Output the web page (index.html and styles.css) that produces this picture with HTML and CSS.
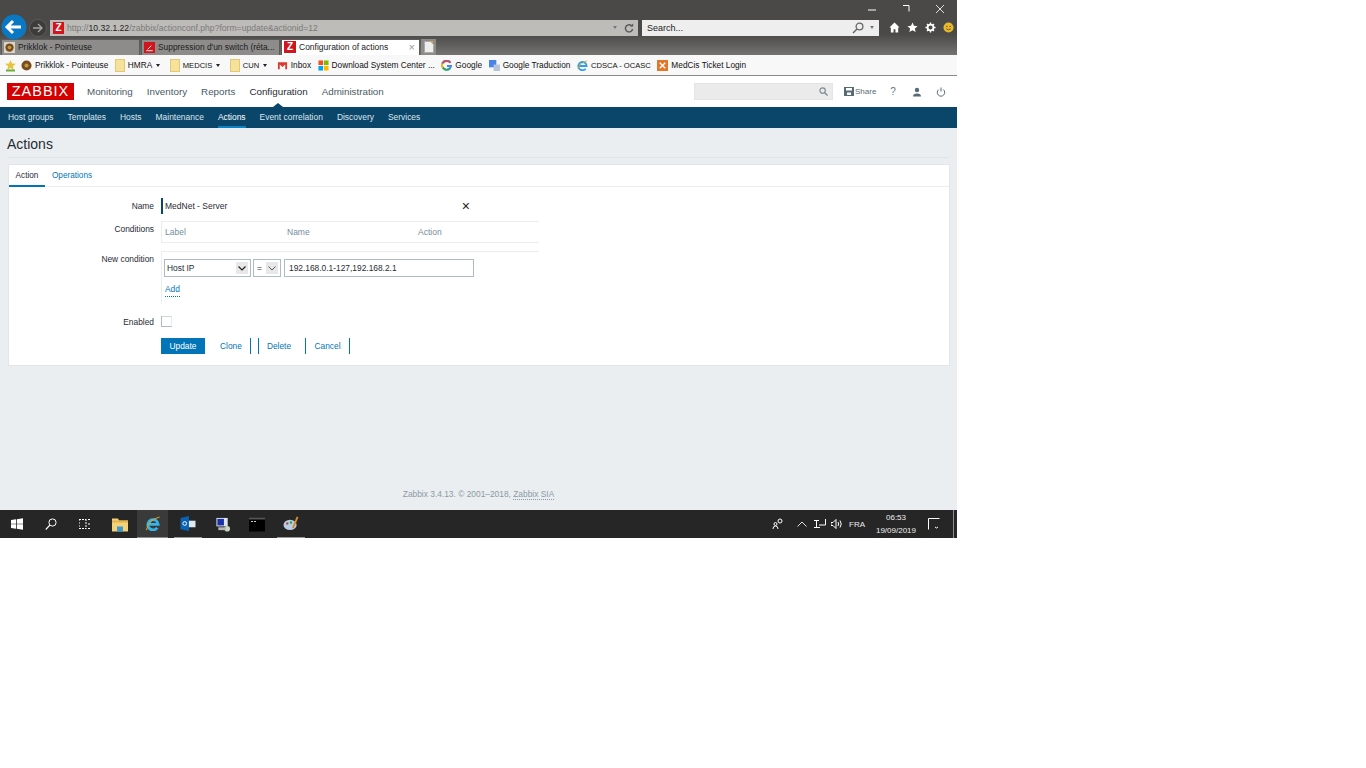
FILE: index.html
```html
<!DOCTYPE html>
<html lang="en">
<head>
<meta charset="utf-8">
<title>Configuration of actions</title>
<link rel="stylesheet" href="styles.css">
</head>
<body>
<div class="screen">
  <div class="chrome">
    <div class="winbar">
      <svg class="win-ic" viewBox="0 0 10 10"><path d="M1 6h8" stroke="#fff" fill="none"/></svg>
      <svg class="win-ic" viewBox="0 0 10 10"><path d="M2 1.500h6v6" stroke="#fff" fill="none"/></svg>
      <svg class="win-ic" viewBox="0 0 10 10"><path d="M1 1l8 8M9 1l-8 8" stroke="#ddd" fill="none"/></svg>
    </div>
    <div class="addr-row">
      <svg class="back" viewBox="0 0 26 26"><circle cx="13" cy="13" r="12.500" fill="#0a78c2"/><path d="M6 13h14M12 7l-6 6 6 6" stroke="#fff" stroke-width="3" fill="none"/></svg>
      <svg class="fwd" viewBox="0 0 18 18"><circle cx="9" cy="9" r="8.500" fill="#3d3c3a" stroke="#5d5c5a"/><path d="M4 9h9M9 5l4 4-4 4" stroke="#a5a5a3" stroke-width="1.400" fill="none"/></svg>
      <div class="addr">
        <span class="zfav">Z</span>
        <span class="url"><span class="url-dim">http://</span><b>10.32.1.22</b><span class="url-dim">/zabbix/actionconf.php?form=update&amp;actionid=12</span></span>
        <span class="addr-tools"><span class="mini-caret"></span>
          <svg class="refresh" viewBox="0 0 10 10"><path d="M8 3.200A3.600 3.600 0 1 0 8.600 6" stroke="#555" stroke-width="1.400" fill="none"/><path d="M6 3.500h3.200V.5z" fill="#555"/></svg>
        </span>
      </div>
      <div class="search">
        <span class="search-text">Search...</span>
        <svg class="search-ic" viewBox="0 0 12 12"><circle cx="7.500" cy="4.500" r="3.400" stroke="#666" stroke-width="1.300" fill="none"/><path d="M5 7l-4 4" stroke="#666" stroke-width="1.500"/></svg>
        <span class="mini-caret"></span>
      </div>
      <div class="tools">
        <svg class="tool" viewBox="0 0 12 12"><path d="M6 .5L.5 6H2v5.500h3V8h2v3.500h3V6h1.500z" fill="#fff"/></svg>
        <svg class="tool" viewBox="0 0 12 12"><path d="M6 .5l1.600 3.600 3.900.4-2.900 2.600.8 3.900L6 9l-3.400 2 .8-3.900L.5 4.500l3.900-.4z" fill="#fff"/></svg>
        <svg class="tool" viewBox="0 0 12 12"><circle cx="6" cy="6" r="3.200" stroke="#fff" stroke-width="2" fill="none"/><path d="M6 .5v2M6 9.500v2M.5 6h2M9.500 6h2M2.200 2.200l1.400 1.400M8.400 8.400l1.400 1.400M2.200 9.800l1.400-1.400M8.400 3.600l1.400-1.400" stroke="#fff" stroke-width="1.600"/></svg>
        <svg class="tool" viewBox="0 0 12 12"><circle cx="6" cy="6" r="5.500" fill="#e9b92e"/><circle cx="4.200" cy="4.800" r=".8" fill="#6b5510"/><circle cx="7.800" cy="4.800" r=".8" fill="#6b5510"/><path d="M3.500 7.500q2.500 2 5 0" stroke="#6b5510" fill="none"/></svg>
      </div>
    </div>
    <div class="tab-row">
      <div class="tab">
        <svg class="fav" viewBox="0 0 12 12"><rect width="12" height="12" fill="#d9d4c4"/><circle cx="6" cy="6" r="4.500" fill="#7a4a20"/><circle cx="6" cy="6" r="2" fill="#b9a13a"/></svg>
        <span class="tab-text">Prikklok - Pointeuse</span>
      </div>
      <div class="tab">
        <svg class="fav" viewBox="0 0 12 12"><rect width="12" height="12" fill="#d2141c"/><path d="M2.500 9.500h7M4 8l4-4" stroke="#fff"/></svg>
        <span class="tab-text">Suppression d'un switch (réta...</span>
      </div>
      <div class="tab tab-active">
        <span class="zfav">Z</span>
        <span class="tab-text">Configuration of actions</span>
        <span class="tab-x">×</span>
      </div>
      <div class="tab-new"><svg viewBox="0 0 10 12" class="new-ic"><path d="M.5.500h6l3 3v8h-9z" fill="#eee" stroke="#aaa"/><path d="M7 0h2v2H7z" fill="#e8a33a"/></svg></div>
    </div>
  </div>

  <div class="bookmarks">
    <svg class="bm-star" viewBox="0 0 13 13"><path d="M6.500 1l1.500 3.500 3.800.3-2.900 2.500.9 3.700-3.300-2-3.300 2 .9-3.700L1.200 4.800 5 4.500z" fill="#e9c33b"/><path d="M2 11.500h9" stroke="#6aae3c" stroke-width="2"/></svg>
    <span class="bm"><svg class="fav" viewBox="0 0 12 12"><circle cx="6" cy="6" r="5.500" fill="#7a4a20"/><circle cx="6" cy="6" r="2.200" fill="#b9a13a"/></svg>Prikklok - Pointeuse</span>
    <span class="bm"><span class="folder"></span>HMRA<span class="caret"></span></span>
    <span class="bm bm-caps"><span class="folder"></span>MEDCIS<span class="caret"></span></span>
    <span class="bm bm-caps"><span class="folder"></span>CUN<span class="caret"></span></span>
    <span class="bm"><svg class="fav" viewBox="0 0 12 12"><path d="M1 2.500h10v7.500h-2V5L6 7.500 3 5v5H1z" fill="#d93a2f"/></svg>Inbox</span>
    <span class="bm"><svg class="fav" viewBox="0 0 12 12"><path d="M.5.500h5v5h-5z" fill="#f25022"/><path d="M6.500.500h5v5h-5z" fill="#7fba00"/><path d="M.5 6.500h5v5h-5z" fill="#00a4ef"/><path d="M6.500 6.500h5v5h-5z" fill="#ffb900"/></svg>Download System Center ...</span>
    <span class="bm"><svg class="fav" viewBox="0 0 12 12"><path d="M10.500 3A5 5 0 1 0 11 6.500H6.500" stroke="#4285f4" stroke-width="2" fill="none"/><path d="M2 3.500A5 5 0 0 1 10 3" stroke="#ea4335" stroke-width="2" fill="none"/><path d="M1.500 4A5 5 0 0 0 2 8.500" stroke="#fbbc05" stroke-width="2" fill="none"/><path d="M2 8.500A5 5 0 0 0 9.500 9.500" stroke="#34a853" stroke-width="2" fill="none"/></svg>Google</span>
    <span class="bm"><svg class="fav" viewBox="0 0 12 12"><rect width="8" height="8" fill="#4a84e8"/><rect x="5" y="5" width="7" height="7" fill="#b8c4d6"/></svg>Google Traduction</span>
    <span class="bm bm-caps"><svg class="fav" viewBox="0 0 12 12"><path d="M2 6.500h8.500A4.500 4.500 0 1 0 9.500 9.500" stroke="#2f9fe0" stroke-width="2" fill="none"/><path d="M1 10Q3 3 11 1" stroke="#e0a92a" fill="none"/></svg>CDSCA - OCASC</span>
    <span class="bm"><svg class="fav" viewBox="0 0 12 12"><rect width="12" height="12" fill="#e2762a"/><path d="M3 3l6 6M9 3l-6 6" stroke="#fff" stroke-width="1.500"/></svg>MedCis Ticket Login</span>
  </div>

  <header class="zhead">
    <span class="logo">ZABBIX</span>
    <nav class="topnav">
      <a>Monitoring</a><a>Inventory</a><a>Reports</a><a class="cur">Configuration</a><a>Administration</a>
    </nav>
    <div class="zsearch">
      <svg class="zs-ic" viewBox="0 0 10 10"><circle cx="4" cy="4" r="3" stroke="#7c8a94" stroke-width="1.300" fill="none"/><path d="M6.300 6.300L9.500 9.500" stroke="#7c8a94" stroke-width="1.500"/></svg>
    </div>
    <span class="share"><svg class="share-ic" viewBox="0 0 10 9"><path d="M0 0h10v9H0z" fill="#566b78"/><path d="M2 1h6v2.500H2zM3 5.500h4V8H3z" fill="#fff"/></svg>Share</span>
    <span class="hicon help">?</span>
    <svg class="hicon" viewBox="0 0 10 10"><circle cx="5" cy="3" r="2.200" fill="#566b78"/><path d="M1 9.500q0-3 4-3t4 3z" fill="#566b78"/></svg>
    <svg class="hicon" viewBox="0 0 10 10"><path d="M2.800 2.500a3.700 3.700 0 1 0 4.400 0" stroke="#566b78" fill="none"/><path d="M5 .5v4" stroke="#566b78"/></svg>
  </header>

  <nav class="subnav">
    <a>Host groups</a><a>Templates</a><a>Hosts</a><a>Maintenance</a><a class="sub-cur">Actions</a><a>Event correlation</a><a>Discovery</a><a>Services</a>
  </nav>

  <main class="main">
    <h1 class="title">Actions</h1>
    <section class="card">
      <div class="tabs"><a class="t-on">Action</a><a class="t-off">Operations</a></div>
      <form class="form">
        <div class="row row-name">
          <label class="lbl">Name</label>
          <div class="name-field"><span>MedNet - Server</span><span class="clear">×</span></div>
        </div>
        <div class="row row-cond">
          <label class="lbl lbl-top">Conditions</label>
          <div class="cond-table"><span class="c1">Label</span><span class="c2">Name</span><span class="c3">Action</span></div>
        </div>
        <div class="row row-new">
          <label class="lbl lbl-top2">New condition</label>
          <div class="new-box">
            <div class="new-line">
              <div class="sel sel-a"><span>Host IP</span><span class="sel-btn"><svg viewBox="0 0 8 5"><path d="M.5.500L4 4 7.500.500" stroke="#222" stroke-width="1.200" fill="none"/></svg></span></div>
              <div class="sel sel-b"><span>=</span><span class="sel-btn"><svg viewBox="0 0 8 5"><path d="M.5.500L4 4 7.500.500" stroke="#555" fill="none"/></svg></span></div>
              <div class="ipt">192.168.0.1-127,192.168.2.1</div>
            </div>
            <a class="add">Add</a>
          </div>
        </div>
        <div class="row row-en">
          <label class="lbl">Enabled</label>
          <span class="check"></span>
        </div>
        <div class="row-btn">
          <span class="btn-main">Update</span>
          <span class="btn btn-clone">Clone</span>
          <span class="btn btn-del">Delete</span>
          <span class="btn btn-can">Cancel</span>
        </div>
      </form>
    </section>
    <footer class="foot">Zabbix 3.4.13. © 2001–2018, <span class="foot-link">Zabbix SIA</span></footer>
  </main>

  <div class="taskbar">
    <span class="slot"><svg class="tb" viewBox="0 0 12 12"><path d="M0 2l5-.7V5.700H0zM5.800 1.200L12 .3v5.400H5.800zM0 6.300h5v4.500L0 10zM5.800 6.300H12v5.400l-6.200-.9z" fill="#fff"/></svg></span>
    <span class="slot"><svg class="tb" viewBox="0 0 12 12"><circle cx="7.500" cy="4.500" r="3.600" stroke="#fff" fill="none"/><path d="M4.800 7.200L.8 11.500" stroke="#fff" stroke-width="1.200"/></svg></span>
    <span class="slot"><svg class="tb" viewBox="0 0 12 12"><path d="M0 1.500h7M0 10.500h7M0 1v10M7 1v10M9 1.500h3M9 6h3M9 10.500h3" stroke="#fff" stroke-dasharray="2 1" fill="none"/></svg></span>
    <span class="slot slot-folder"><svg class="tb tb-l" viewBox="0 0 16 14"><path d="M0 1h6l1 2h9v11H0z" fill="#f3d27a"/><path d="M0 3h16v2H0z" fill="#e2b34b"/><path d="M5 9h6v5H5z" fill="#3d9ad1"/></svg></span>
    <span class="slot slot-on"><svg class="tb tb-l" viewBox="0 0 16 16"><path d="M2.500 9h11A5.500 5.500 0 1 0 12.500 12.500" stroke="#35b3ea" stroke-width="3" fill="none"/><path d="M1 15Q3 4 15 1" stroke="#d9a522" stroke-width="1.200" fill="none"/></svg></span>
    <span class="slot slot-run slot-mail"><svg class="tb tb-l" viewBox="0 0 16 16"><path d="M8 5h8v7H8z" fill="#dce8f4"/><path d="M0 2l9-2v16l-9-2z" fill="#0a62b4"/><circle cx="4.500" cy="8" r="2" stroke="#fff" fill="none"/></svg></span>
    <span class="slot"><svg class="tb tb-l" viewBox="0 0 16 16"><path d="M1 1h12v9H1z" fill="#dfe6f2"/><path d="M2 2h7v7H2z" fill="#1a2fa8"/><circle cx="12.500" cy="12.500" r="3" fill="#c9d6c4"/><path d="M3 11h8v3H3z" fill="#b5b5b5"/></svg></span>
    <span class="slot"><svg class="tb tb-l" viewBox="0 0 16 14"><path d="M0 0h16v14H0z" fill="#000"/><path d="M0 0h16v2H0z" fill="#555"/><path d="M2 4h2M5 4h2" stroke="#ccc"/></svg></span>
    <span class="slot slot-run slot-paint"><svg class="tb tb-l" viewBox="0 0 16 16"><ellipse cx="7" cy="9.500" rx="7" ry="5.500" fill="#b4cfe6"/><circle cx="4" cy="8" r="1.300" fill="#c43"/><circle cx="8" cy="7" r="1.300" fill="#3a3"/><path d="M10 13L15 1" stroke="#d98a2a" stroke-width="2"/></svg></span>
    <div class="tray">
      <svg class="tr tr-p" viewBox="0 0 12 12"><circle cx="8" cy="3" r="2" stroke="#fff" fill="none"/><circle cx="3.500" cy="6" r="1.500" stroke="#fff" fill="none"/><path d="M1 11q0-3 2.500-3T6 11" stroke="#fff" fill="none"/></svg>
      <svg class="tr tr-c" viewBox="0 0 10 6"><path d="M.5 5.500L5 1l4.500 4.500" stroke="#ddd" fill="none"/></svg>
      <svg class="tr tr-n" viewBox="0 0 12 10"><path d="M0 1.500h5M2.500 1.500v7M0 8.500h6M5 6h6.500V0" stroke="#fff" fill="none"/></svg>
      <svg class="tr tr-s" viewBox="0 0 12 10"><path d="M0 3.500h2l3-3v9l-3-3H0z" stroke="#fff" fill="none"/><path d="M7 3q1.500 2 0 4M9 1.500q2.500 3.500 0 7" stroke="#fff" fill="none"/></svg>
      <span class="fra">FRA</span>
      <span class="clock"><span>06:53</span><span>19/09/2019</span></span>
      <svg class="tr tr-m" viewBox="0 0 12 12"><path d="M11.500 .5H.5v11M7 9l1.500 1L10 9" stroke="#fff" fill="none"/></svg>
      <span class="show-desk"></span>
    </div>
  </div>
</div>
</body>
</html>
```

FILE: styles.css
```css
* { box-sizing: border-box; }
html, body { margin: 0; padding: 0; background: #fff; }
body { font-family: "Liberation Sans", Arial, sans-serif; font-size: 9px; color: #1f2c33; }
svg { display: block; flex: none; }

.screen { width: 957px; height: 538px; display: flex; flex-direction: column; overflow: hidden; }

/* browser chrome */
.chrome { height: 55px; background: linear-gradient(#4a4947 0, #4a4947 34px, #6a6967 50px, #74736f 55px); display: flex; flex-direction: column; }
.winbar { height: 18px; display: flex; justify-content: flex-end; gap: 24px; padding: 4px 12px 0 0; }
.win-ic { width: 10px; height: 10px; }
.addr-row { height: 19px; display: flex; align-items: center; padding-left: 1px; }
.back { width: 26px; height: 26px; margin-bottom: 2px; position: relative; z-index: 1; }
.fwd { width: 18px; height: 18px; margin: 0 3px 0 2px; }
.addr { width: 588px; height: 16px; background: #bdbcb9; display: flex; align-items: center; font-size: 8.600px; }
.zfav { width: 12px; height: 12px; background: #d2141c; color: #fff; font-size: 10px; font-weight: 700; line-height: 12px; text-align: center; flex: none; display: block; }
.addr .zfav { margin: 0 3px 0 3px; width: 11px; }
.url { flex: 1; color: #2b2b2b; white-space: nowrap; }
.url b { font-weight: 400; color: #222; }
.url-dim { color: #7b7a77; }
.addr-tools { display: flex; align-items: center; gap: 7px; padding-right: 4px; }
.mini-caret { width: 0; height: 0; border: 2px solid transparent; border-top: 3px solid #777; border-bottom: 0; }
.refresh { width: 10px; height: 10px; }
.search { width: 237px; height: 16px; margin-left: 4px; background: #eeeeee; display: flex; align-items: center; padding: 0 5px; font-size: 9px; color: #222; }
.search-text { flex: 1; }
.search-ic { width: 12px; height: 12px; margin-right: 6px; }
.tools { display: flex; gap: 7px; margin-left: 10px; }
.tool { width: 11px; height: 11px; }

.tab-row { height: 16px; margin-top: 2px; display: flex; padding-left: 1px; gap: 1px; }
.tab { width: 139px; height: 16px; background: #8d8c8a; border: 1px solid #5c5b59; border-bottom: 0; display: flex; align-items: center; padding: 0 0 1px 2px; gap: 3px; font-size: 8.400px; color: #1c1c1c; white-space: nowrap; overflow: hidden; }
.tab-text { flex: 1; }
.tab-active { background: #fff; color: #222; font-size: 8.500px; }
.tab-x { color: #999; font-size: 11px; padding-right: 4px; line-height: 10px; }
.fav { width: 11px; height: 11px; flex: none; }
.tab-new { width: 15px; height: 16px; background: #8d8c8a; display: flex; align-items: center; justify-content: center; }
.new-ic { width: 10px; height: 12px; }

.bookmarks { height: 21px; background: #f8f8f8; border-bottom: 1px solid #8a8a8a; display: flex; align-items: center; padding-left: 4px; font-size: 8.300px; color: #111; white-space: nowrap; }
.bm-star { width: 13px; height: 13px; margin-right: 4px; }
.bm { display: flex; align-items: center; gap: 3px; margin-right: 6.500px; }
.bm-caps { font-size: 7.600px; }
.folder { width: 10px; height: 13px; background: #f7e29a; border: 1px solid #e0c877; display: block; }
.caret { width: 0; height: 0; border: 2px solid transparent; border-top: 3px solid #222; border-bottom: 0; margin-left: 1px; margin-right: 3px; }

/* zabbix header */
.zhead { height: 31px; background: #fff; display: flex; align-items: center; padding: 0 11px 0 7px; }
.logo { width: 67px; height: 17px; background: #d40000; color: #fff; font-size: 14.500px; line-height: 17px; text-align: center; letter-spacing: 1px; }
.topnav { display: flex; gap: 14px; margin-left: 13px; flex: 1; font-size: 9.800px; color: #4a5a64; height: 31px; align-items: center; }
.topnav a.cur { color: #1f2c33; position: relative; }
.topnav a.cur::after { content: ""; position: absolute; left: 24px; bottom: -10px; border: 5px solid transparent; border-bottom: 4px solid #0a466a; border-top: 0; }
.zsearch { width: 139px; height: 17px; background: #ebebeb; border: 1px solid #e4e4e4; display: flex; align-items: center; justify-content: flex-end; padding-right: 4px; }
.zs-ic { width: 9px; height: 9px; }
.share { display: flex; align-items: center; gap: 1px; margin-left: 11px; font-size: 8px; color: #5a6b76; width: 38px; }
.share-ic { width: 10px; height: 9px; }
.hicon { width: 10px; height: 10px; margin-left: 14px; }
.help { margin-left: 6px; font-size: 10px; line-height: 10px; color: #667883; text-align: center; }

.subnav { height: 21px; background: #0a466a; display: flex; gap: 14px; padding-left: 8px; font-size: 8.450px; color: #dbe5eb; }
.subnav a { line-height: 21px; height: 21px; }
.sub-cur { color: #fff; border-bottom: 2px solid #0b84c6; }

/* main */
.main { flex: 1; background: #ebeef1; padding: 0 8px; display: flex; flex-direction: column; }
.title { margin: 0; height: 30px; padding-top: 8px; font-size: 14px; font-weight: 400; line-height: 16px; color: #1f2c33; border-bottom: 1px solid #dfe4e8; text-indent: -1px; }
.card { margin-top: 6px; width: 942px; height: 202px; background: #fff; border: 1px solid #e2e6e9; }
.tabs { height: 22px; display: flex; border-bottom: 1px solid #ebeef1; font-size: 8.200px; }
.tabs a { line-height: 22px; height: 22px; }
.t-on { width: 36px; text-align: center; color: #1f2c33; border-bottom: 2px solid #0275b8; }
.t-off { color: #0275b8; margin-left: 7px; }

.form { display: flex; flex-direction: column; }
.row { display: flex; }
.lbl { width: 145px; text-align: right; margin-right: 7px; font-size: 8.400px; color: #1f2c33; flex: none; }
.row-name { height: 17px; margin-top: 10px; align-items: center; }
.name-field { width: 309px; height: 16px; border-left: 2px solid #0a466a; display: flex; justify-content: space-between; align-items: center; padding-left: 2px; font-size: 8.500px; }
.clear { font-size: 14px; line-height: 12px; color: #222; }
.row-cond { margin-top: 7px; height: 22px; }
.lbl-top { padding-top: 3px; }
.cond-table { width: 378px; height: 22px; border: 1px solid #ebeef1; border-right: 0; display: flex; align-items: center; font-size: 8.500px; color: #768d99; padding-left: 3px; }
.c1 { width: 122px; }
.c2 { width: 131px; }
.row-new { margin-top: 8px; height: 53px; }
.lbl-top2 { padding-top: 3px; }
.new-box { width: 378px; border: 1px solid #ebeef1; border-width: 1px 0 0 1px; padding: 7px 0 0 2px; }
.new-line { display: flex; gap: 2px; }
.sel { height: 18px; border: 1px solid #acbbc4; display: flex; align-items: center; justify-content: space-between; padding: 0 2px; font-size: 8.400px; }
.sel-a { width: 87px; }
.sel-b { width: 28px; padding-left: 3px; }
.sel-btn { width: 12px; height: 12px; background: #e8e8e8; display: flex; align-items: center; justify-content: center; }
.sel-btn svg { width: 8px; height: 5px; }
.ipt { width: 190px; height: 18px; margin-left: 1px; border: 1px solid #acbbc4; font-size: 8.400px; line-height: 16px; padding-left: 4px; }
.add { display: inline-block; margin: 7px 0 0 1px; font-size: 8.400px; line-height: 11px; color: #0275b8; border-bottom: 1px dotted #0275b8; height: 13px; }
.row-en { margin-top: 12px; height: 11px; align-items: center; }
.check { width: 11px; height: 11px; border: 1px solid #acbbc4; border-right-color: #e6ebee; border-top-color: #cfd8dd; background: #fff; }
.row-btn { display: flex; margin: 11px 0 0 152px; height: 16px; font-size: 8.400px; line-height: 16px; color: #0275b8; }
.btn-main { width: 44px; background: #0275b8; color: #fff; text-align: center; }
.btn { text-align: center; }
.btn-clone { width: 46px; padding-left: 7px; border-right: 1px solid #0275b8; }
.btn-del { width: 47px; margin-left: 7px; padding-right: 6px; border-left: 1px solid #0275b8; }
.btn-can { width: 45px; border-left: 1px solid #0275b8; border-right: 1px solid #0275b8; }
.foot { margin-top: auto; height: 21px; line-height: 10px; text-align: center; font-size: 8.400px; color: #8a9aa4; }
.foot-link { border-bottom: 1px dotted #8a9aa4; }

/* taskbar */
.taskbar { height: 28px; background: #262626; display: flex; align-items: stretch; }
.slot { width: 34px; display: flex; align-items: center; justify-content: center; flex: none; }
.slot-folder { margin-left: 1px; }
.slot-on { background: #3a3a3a; border-bottom: 1px solid #8c8c8c; width: 31px; }
.slot-run { border-bottom: 1px solid #9a9a9a; width: 28px; }
.slot-mail { margin: 0 4px 0 6px; }
.slot-paint { margin-left: 3px; }
.tb { width: 12px; height: 12px; }
.tb-l { width: 16px; height: 15px; }
.tray { flex: 1; display: flex; align-items: center; justify-content: flex-end; color: #eee; font-size: 8px; }
.tr { flex: none; }
.tr-p { width: 12px; height: 12px; margin-right: 13px; }
.tr-c { width: 10px; height: 6px; margin-right: 7px; }
.tr-n { width: 12px; height: 10px; margin-right: 5px; }
.tr-s { width: 12px; height: 10px; margin-right: 6px; }
.fra { margin-right: 9px; }
.clock { width: 44px; display: flex; flex-direction: column; align-items: center; font-size: 8px; line-height: 13px; margin-right: 10px; }
.tr-m { width: 12px; height: 12px; margin-right: 13px; }
.show-desk { width: 1px; height: 28px; background: #8c8c8c; margin-right: 3px; }
```
